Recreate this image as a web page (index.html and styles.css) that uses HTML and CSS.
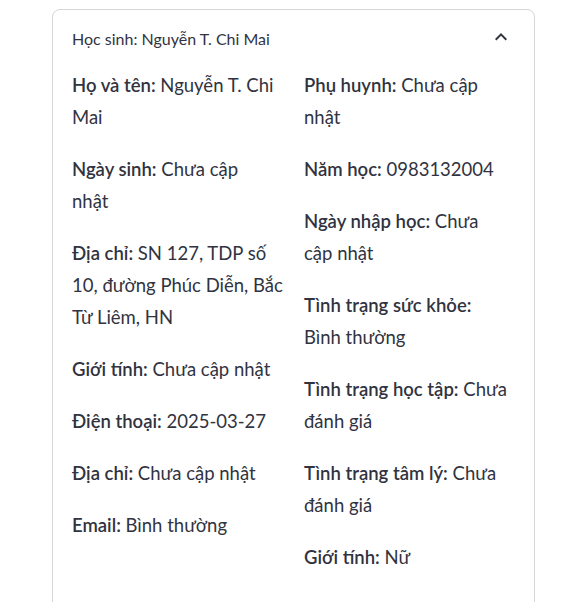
FILE: index.html
```html
<!DOCTYPE html>
<html lang="vi">
<head>
<meta charset="utf-8">
<link rel="stylesheet" href="styles.css">
</head>
<body>
<div class="expander">
  <div class="summary">
    <span class="summary-label">Học sinh: Nguyễn T. Chi Mai</span>
    <svg class="chevron" width="24" height="24" viewBox="0 0 24 24"><path d="M12 8l-6 6 1.41 1.41L12 10.83l4.59 4.58L18 14z"/></svg>
  </div>
  <div class="content">
    <div class="cols">
      <div class="col">
        <p><b>Họ và tên:</b> Nguyễn T. Chi<br>Mai</p>
        <p><b>Ngày sinh:</b> Chưa cập<br>nhật</p>
        <p><b>Địa chỉ:</b> SN 127, TDP số<br>10, đường Phúc Diễn, Bắc<br>Từ Liêm, HN</p>
        <p><b>Giới tính:</b> Chưa cập nhật</p>
        <p><b>Điện thoại:</b> 2025-03-27</p>
        <p><b>Địa chỉ:</b> Chưa cập nhật</p>
        <p><b>Email:</b> Bình thường</p>
      </div>
      <div class="col">
        <p><b>Phụ huynh:</b> Chưa cập<br>nhật</p>
        <p><b>Năm học:</b> 0983132004</p>
        <p><b>Ngày nhập học:</b> Chưa<br>cập nhật</p>
        <p><b>Tình trạng sức khỏe:</b><br>Bình thường</p>
        <p><b>Tình trạng học tập:</b> Chưa<br>đánh giá</p>
        <p><b>Tình trạng tâm lý:</b> Chưa<br>đánh giá</p>
        <p><b>Giới tính:</b> Nữ</p>
      </div>
    </div>
    <p class="extra">Tài liệu đính kèm</p>
  </div>
</div>
</body>
</html>
```
FILE: styles.css
```css
html, body {
  margin: 0;
  padding: 0;
  background: #ffffff;
}
body {
  font-family: "Lato", "Noto Sans", sans-serif;
  color: #31333f;
}
.expander {
  box-sizing: border-box;
  width: 483px;
  margin: 9px 0 0 52px;
  border: 1px solid #d6d6d9;
  border-radius: 8px;
  padding-bottom: 40px;
}
.summary {
  display: flex;
  justify-content: space-between;
  align-items: flex-start;
  padding: 15px 21px 16px 19px;
}
.summary-label {
  font-size: 16px;
  line-height: 28px;
}
.chevron {
  margin-top: 0;
  fill: #31333f;
}
.content {
  display: flex;
  flex-direction: column;
  gap: 20px;
  padding: 0 20px 0 19px;
}
.cols {
  display: grid;
  grid-template-columns: 212px 210px;
  column-gap: 20px;
}
.col p, .extra {
  margin: 0 0 20px;
  font-size: 18.5px;
  line-height: 32px;
  white-space: nowrap;
}
.col p:last-child, .extra {
  margin-bottom: 0;
}
.col b {
  font-weight: 600;
}
```
